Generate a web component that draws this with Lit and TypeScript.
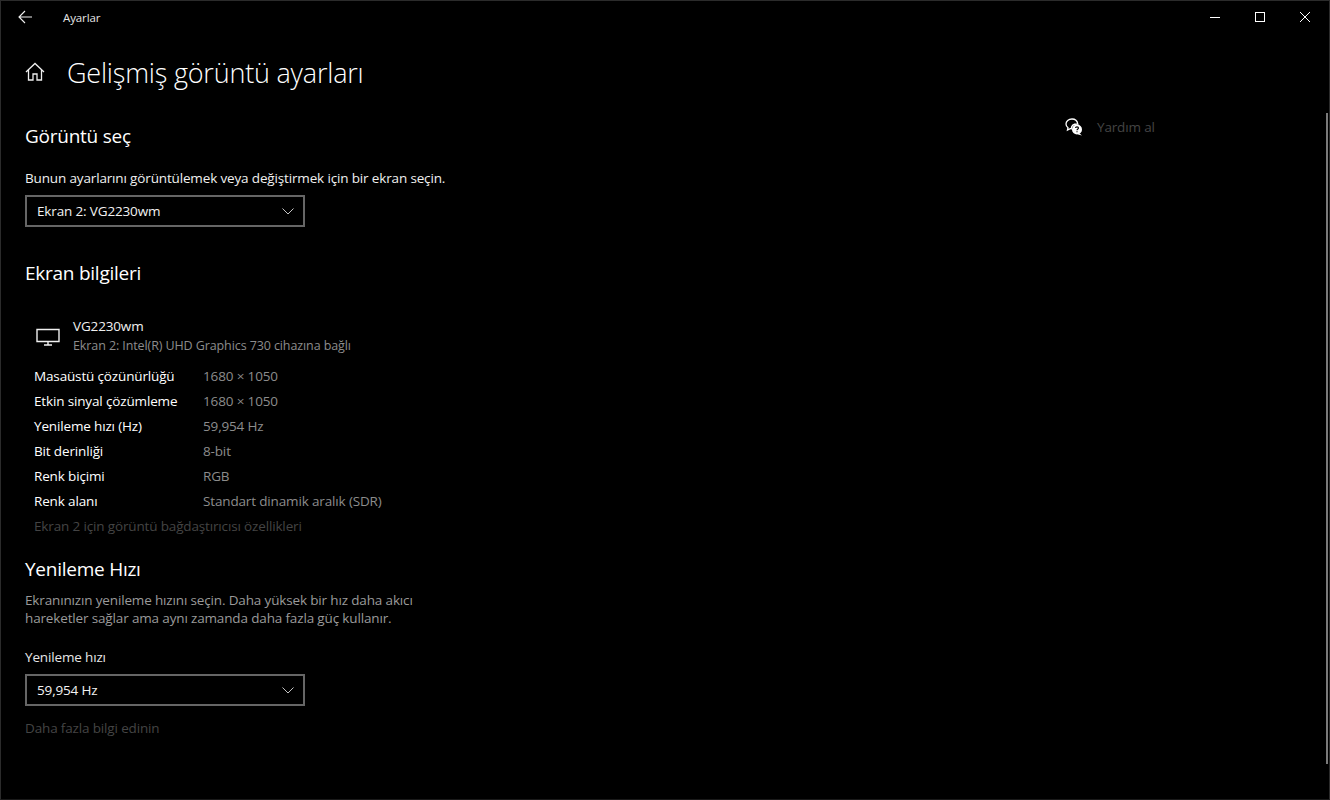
import { html, css, LitElement } from "lit";
import { customElement } from "lit/decorators.js";

const specs = [
  ["Masaüstü çözünürlüğü", "1680 × 1050"],
  ["Etkin sinyal çözümleme", "1680 × 1050"],
  ["Yenileme hızı (Hz)", "59,954 Hz"],
  ["Bit derinliği", "8-bit"],
  ["Renk biçimi", "RGB"],
  ["Renk alanı", "Standart dinamik aralık (SDR)"],
];

const chevron = html`<svg class="chevron" width="12" height="7" viewBox="0 0 12 7" fill="none" stroke="#c4c4c4" stroke-width="1">
  <path d="M0.5 0.5 L6 6 L11.5 0.5" />
</svg>`;

@customElement("app-root")
export class AppRoot extends LitElement {
  static styles = css`
    :host {
      display: block;
      height: 800px;
      overflow: hidden;
      background: #000;
      color: #fff;
      font-family: "Open Sans", "Noto Sans", sans-serif;
      font-size: 13.5px;
      letter-spacing: -0.15px;
    }
    .window {
      position: relative;
      box-sizing: border-box;
      height: 800px;
      border: 1px solid #2b2b2b;
      border-bottom-color: #1a1a1a;
      background: #000;
    }
    .titlebar {
      display: flex;
      align-items: center;
      height: 32px;
      padding-left: 17px;
    }
    .back {
      width: 16px;
      height: 14px;
      margin-right: 29px;
    }
    .app-name {
      font-size: 11.5px;
      letter-spacing: -0.1px;
      color: #e6e6e6;
    }
    .controls {
      display: flex;
      margin-left: auto;
      margin-right: 2px;
    }
    .controls div {
      display: flex;
      align-items: center;
      justify-content: center;
      width: 45px;
      height: 32px;
    }
    .body {
      display: flex;
    }
    .content {
      width: 1040px;
      padding-left: 24px;
    }
    .page-title {
      display: flex;
      align-items: center;
      height: 46px;
      margin-top: 16px;
    }
    .home {
      width: 20px;
      height: 20px;
      margin-right: 22px;
    }
    h1 {
      margin: 0;
      font-size: 27px;
      font-weight: 300;
      letter-spacing: -0.2px;
    }
    h2 {
      margin: 0;
      height: 28px;
      line-height: 28px;
      font-size: 19px;
      font-weight: 400;
      letter-spacing: -0.25px;
    }
    .select-title {
      margin-top: 27px;
    }
    .hint {
      margin-top: 19px;
      line-height: 18px;
      color: #f0f0f0;
    }
    .select {
      box-sizing: border-box;
      display: flex;
      align-items: center;
      justify-content: space-between;
      width: 280px;
      height: 32px;
      margin-top: 8px;
      padding: 0 9px 0 10px;
      border: 2px solid #666;
      color: #f2f2f2;
    }
    .info-title {
      margin-top: 32px;
    }
    .monitor {
      display: flex;
      margin: 30px 0 0 11px;
    }
    .monitor svg {
      width: 24px;
      height: 18px;
      margin: 11px 13px 0 0;
    }
    .monitor-name {
      line-height: 19px;
      color: #f0f0f0;
    }
    .monitor-sub {
      line-height: 19px;
      font-size: 12.5px;
      letter-spacing: -0.1px;
      color: #8c8c8c;
    }
    .specs {
      display: grid;
      grid-template-columns: 169px auto;
      grid-auto-rows: 25px;
      align-items: center;
      justify-content: start;
      margin: 8px 0 0 9px;
    }
    .spec-value {
      color: #8c8c8c;
    }
    .dim-link {
      color: #444;
    }
    .adapter {
      margin: 1px 0 0 9px;
      line-height: 25px;
    }
    .rate-title {
      margin-top: 16px;
    }
    .desc {
      width: 420px;
      margin-top: 8px;
      line-height: 18px;
      color: #9a9a9a;
    }
    .rate-label {
      margin-top: 21px;
      line-height: 18px;
      color: #e6e6e6;
    }
    .more {
      margin-top: 13px;
      line-height: 18px;
    }
    .help {
      display: flex;
      align-items: center;
      margin-top: 84px;
      height: 20px;
    }
    .help svg {
      width: 18px;
      height: 18px;
      margin-right: 14px;
    }
    .help span {
      color: #444;
    }
    .scrollbar {
      position: absolute;
      top: 112px;
      right: 1px;
      width: 2px;
      height: 651px;
      background: #7a7a7a;
    }
  `;

  render() {
    return html`
      <div class="window">
        <div class="titlebar">
          <svg class="back" viewBox="0 0 16 14" fill="none" stroke="#f0f0f0" stroke-width="1.1">
            <path d="M1 7 H14 M7 1 L1 7 L7 13" />
          </svg>
          <span class="app-name">Ayarlar</span>
          <div class="controls">
            <div>
              <svg width="10" height="10" viewBox="0 0 10 10" stroke="#fff"><path d="M0 5.5 H10" /></svg>
            </div>
            <div>
              <svg width="10" height="10" viewBox="0 0 10 10" fill="none" stroke="#fff"><rect x="0.5" y="0.5" width="9" height="9" /></svg>
            </div>
            <div>
              <svg width="10" height="10" viewBox="0 0 10 10" stroke="#fff"><path d="M0 0 L10 10 M10 0 L0 10" /></svg>
            </div>
          </div>
        </div>
        <div class="body">
          <div class="content">
            <div class="page-title">
              <svg class="home" viewBox="0 0 20 20" fill="none" stroke="#f0f0f0" stroke-width="1.3">
                <path d="M1 10 L10 1.5 L19 10 M3.5 8 V18 H8 V12 H12 V18 H16.5 V8" />
              </svg>
              <h1>Gelişmiş görüntü ayarları</h1>
            </div>
            <h2 class="select-title">Görüntü seç</h2>
            <div class="hint">Bunun ayarlarını görüntülemek veya değiştirmek için bir ekran seçin.</div>
            <div class="select"><span>Ekran 2: VG2230wm</span>${chevron}</div>
            <h2 class="info-title">Ekran bilgileri</h2>
            <div class="monitor">
              <svg viewBox="0 0 24 18" fill="none" stroke="#f0f0f0" stroke-width="1.4">
                <path d="M1 1.5 H23 V13.5 H1 Z M12 13.5 V17 M8 17 H16" />
              </svg>
              <div>
                <div class="monitor-name">VG2230wm</div>
                <div class="monitor-sub">Ekran 2: Intel(R) UHD Graphics 730 cihazına bağlı</div>
              </div>
            </div>
            <div class="specs">
              ${specs.map(
                ([label, value]) => html`<div>${label}</div><div class="spec-value">${value}</div>`
              )}
            </div>
            <div class="adapter dim-link">Ekran 2 için görüntü bağdaştırıcısı özellikleri</div>
            <h2 class="rate-title">Yenileme Hızı</h2>
            <div class="desc">
              Ekranınızın yenileme hızını seçin. Daha yüksek bir hız daha akıcı<br />
              hareketler sağlar ama aynı zamanda daha fazla güç kullanır.
            </div>
            <div class="rate-label">Yenileme hızı</div>
            <div class="select"><span>59,954 Hz</span>${chevron}</div>
            <div class="more dim-link">Daha fazla bilgi edinin</div>
          </div>
          <div class="help">
            <svg viewBox="0 0 18 18" fill="#fff">
              <path d="M7 1 C3.5 1 1 3.3 1 6 C1 7.5 1.7 8.8 3 9.7 L2.5 12 L5.2 10.6 C5.5 10.7 5.8 10.7 6.2 10.8 C6.5 8 8.8 6 12 6 L12.8 6 C12.3 3.2 10 1 7 1 Z" fill="none" stroke="#fff" stroke-width="1.3" />
              <circle cx="12" cy="11.5" r="5" />
              <path d="M14 15 L17 17.5 L13 16.5 Z" />
              <path d="M10.5 10 C10.5 8.5 13.5 8.5 13.5 10 C13.5 11 12 11 12 12.3 M12 13.2 V14.2" fill="none" stroke="#000" stroke-width="1.1" />
            </svg>
            <span>Yardım al</span>
          </div>
        </div>
        <div class="scrollbar"></div>
      </div>
    `;
  }
}
